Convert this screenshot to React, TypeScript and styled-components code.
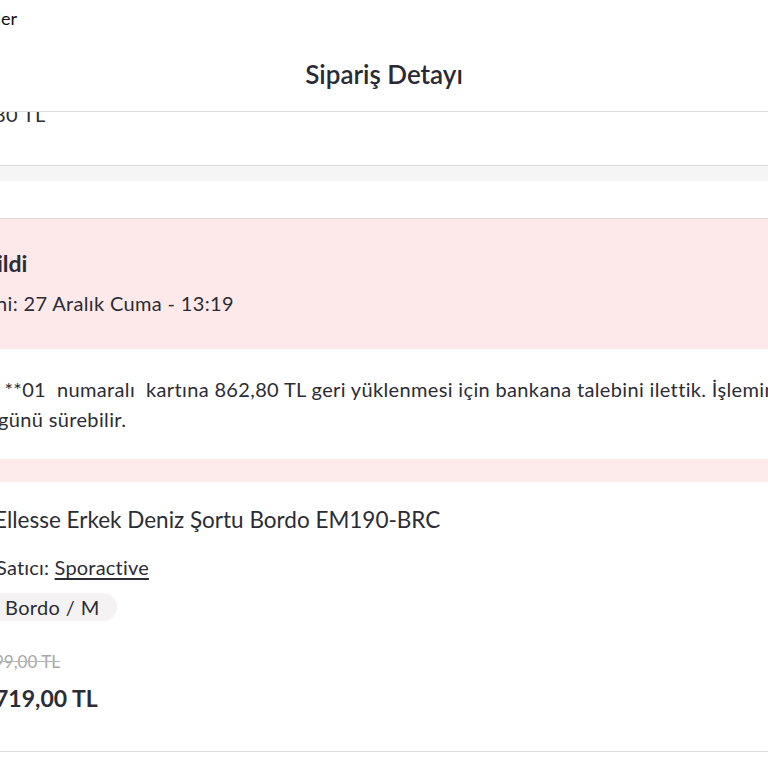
import styled, { createGlobalStyle } from "styled-components";

const GlobalStyle = createGlobalStyle`
  html, body {
    margin: 0;
    padding: 0;
    background: #ffffff;
  }
  body {
    font-family: "Lato", "Noto Sans", sans-serif;
    color: #2a2a33;
  }
`;

const Page = styled.div`
  width: 768px;
  height: 768px;
  overflow: hidden;
  background: #ffffff;
  display: flex;
  flex-direction: column;
`;

const TopBar = styled.div`
  height: 36px;
  display: flex;
  align-items: center;
`;

const Header = styled.div`
  height: 75px;
  border-bottom: 1px solid #dcdcdc;
  display: flex;
  align-items: center;
  justify-content: center;
`;

const Title = styled.h1`
  margin: 0;
  font-size: 26px;
  font-weight: 600;
  color: #2a2a35;
`;

const Line = styled.div<{ $size?: number; $weight?: number; $color?: string; $spacing?: number }>`
  display: flex;
  white-space: pre;
  font-size: ${(p) => p.$size ?? 20}px;
  font-weight: ${(p) => p.$weight ?? 400};
  color: ${(p) => p.$color ?? "#2c2c35"};
  letter-spacing: ${(p) => p.$spacing ?? 0.35}px;
`;

// start of a line that runs off the left edge; it ends at $edge
const Lead = styled.span<{ $edge: number }>`
  flex: 0 0 0px;
  width: 0;
  min-width: 0;
  margin-left: ${(p) => p.$edge}px;
  display: flex;
  justify-content: flex-end;
  white-space: pre;
`;

const Summary = styled.div`
  height: 53px;
  border-bottom: 1px solid #dcdcdc;
  overflow: hidden;
`;

const SummaryLine = styled(Line)`
  margin-top: -13px;
  line-height: 30px;
`;

const Gap = styled.div`
  height: 15px;
  background: #f5f5f5;
`;

const Spacer = styled.div`
  height: 37px;
  border-bottom: 1px solid #dcdcdc;
`;

const StatusCard = styled.div`
  height: 130px;
  background: #fde9ea;
  box-sizing: border-box;
  padding-top: 30px;
  display: flex;
  flex-direction: column;
  gap: 14px;
`;

const Refund = styled.div`
  height: 110px;
  box-sizing: border-box;
  padding-top: 25px;
  display: flex;
  flex-direction: column;
  line-height: 30px;
`;

const PinkBand = styled.div`
  height: 23px;
  background: #fdeaeb;
`;

const Product = styled.div`
  height: 270px;
  box-sizing: border-box;
  padding-top: 24px;
  border-bottom: 1px solid #dcdcdc;
  display: flex;
  flex-direction: column;
`;

const SellerLine = styled(Line)`
  margin-top: 22px;
`;

const Seller = styled.a`
  color: #2c2c35;
  text-decoration: underline;
  text-underline-offset: 3px;
`;

const Chip = styled.div`
  margin-top: 14px;
  margin-left: -30px;
  align-self: flex-start;
  height: 28px;
  padding: 0 17px 0 35px;
  border-radius: 14px;
  background: #f4f2f3;
  display: flex;
  align-items: center;
  font-size: 20px;
  letter-spacing: 0.35px;
  color: #2c2c35;
`;

const OldPrice = styled(Line)`
  margin-top: 30px;
  text-decoration: line-through;
  text-decoration-color: #b5b5b5;
`;

const Price = styled(Line)`
  margin-top: 12px;
`;

export default function App() {
  return (
    <>
      <GlobalStyle />
      <Page>
        <TopBar>
          <Line $size={18} $color="#111" $spacing={0}>
            <Lead $edge={1}>Siparişl</Lead>
            er
          </Line>
        </TopBar>
        <Header>
          <Title>Sipariş Detayı</Title>
        </Header>
        <Summary>
          <SummaryLine>
            <Lead $edge={-6}>Toplam: 862,</Lead>
            {"80 TL"}
          </SummaryLine>
        </Summary>
        <Gap />
        <Spacer />
        <StatusCard>
          <Line $size={23} $weight={700} $spacing={0}>
            <Lead $edge={-3}>İptal Ed</Lead>
            ildi
          </Line>
          <Line>
            <Lead $edge={-4}>İptal Tarihi</Lead>
            {"ni: 27 Aralık Cuma - 13:19"}
          </Line>
        </StatusCard>
        <Refund>
          <Line>
            <Lead $edge={-1}>Kartının ****</Lead>
            {" **01  numaralı  kartına 862,80 TL geri yüklenmesi için bankana talebini ilettik. İşleminin"}
          </Line>
          <Line>
            <Lead $edge={-2}>yansıması 10 iş </Lead>
            günü sürebilir.
          </Line>
        </Refund>
        <PinkBand />
        <Product>
          <Line $size={22.5} $spacing={0}>
            <Lead $edge={-6}>Marka: </Lead>
            {"Ellesse Erkek Deniz Şortu Bordo EM190-BRC"}
          </Line>
          <SellerLine $spacing={0.2}>
            <Lead $edge={-4}>Ürün </Lead>
            {"Satıcı: "}
            <Seller>Sporactive</Seller>
          </SellerLine>
          <Chip>Bordo / M</Chip>
          <OldPrice $size={17} $color="#a8a8a8" $spacing={0}>
            <Lead $edge={-6}>8</Lead>
            99,00 TL
          </OldPrice>
          <Price $size={23} $weight={700} $spacing={0}>
            <Lead $edge={-5}>1.</Lead>
            719,00 TL
          </Price>
        </Product>
      </Page>
    </>
  );
}
